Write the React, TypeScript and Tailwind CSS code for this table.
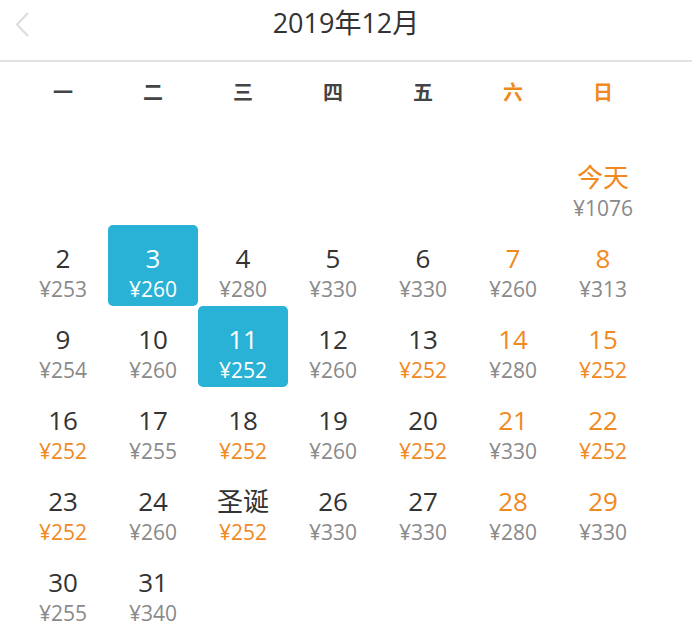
type Day = { label: string; price: string; weekend?: boolean; today?: boolean; low?: boolean; selected?: boolean };

const WEEK = ['一', '二', '三', '四', '五', '六', '日'];

const lows = new Set([13, 15, 16, 18, 20, 22, 23, 25]);
const prices: Record<number, string> = {
  1: '1076', 2: '253', 3: '260', 4: '280', 5: '330', 6: '330', 7: '260', 8: '313',
  9: '254', 10: '260', 11: '252', 12: '260', 13: '252', 14: '280', 15: '252',
  16: '252', 17: '255', 18: '252', 19: '260', 20: '252', 21: '330', 22: '252',
  23: '252', 24: '260', 25: '252', 26: '330', 27: '330', 28: '280', 29: '330',
  30: '255', 31: '340',
};

function buildDays(): (Day | null)[] {
  const out: (Day | null)[] = [null, null, null, null, null, null];
  for (let d = 1; d <= 31; d++) {
    const col = out.length % 7;
    out.push({
      label: d === 1 ? '今天' : d === 25 ? '圣诞' : String(d),
      price: prices[d],
      weekend: col >= 5,
      today: d === 1,
      low: lows.has(d),
      selected: d === 3 || d === 11,
    });
  }
  return out;
}

function Cell({ day }: { day: Day | null }) {
  if (!day) return <div className="h-[81px]" />;
  const numColor = day.selected ? 'text-white' : day.weekend || day.today ? 'text-[#f0891e]' : 'text-[#333333]';
  const priceColor = day.selected ? 'text-white' : day.low ? 'text-[#f0891e]' : 'text-[#8a8a8a]';
  return (
    <div className={`h-[81px] flex flex-col items-center pt-[18px] rounded-[5px] ${day.selected ? 'bg-[#29b2d6]' : ''}`}>
      <div className={`text-[26px] leading-[30px] ${numColor}`}>{day.label}</div>
      <div className={`text-[21px] leading-[26px] mt-[3px] ${priceColor}`}>¥{day.price}</div>
    </div>
  );
}

export default function App() {
  const days = buildDays();
  return (
    <div className="w-[692px] h-[638px] bg-white overflow-hidden" style={{ fontFamily: '"Open Sans", "Noto Sans CJK SC", sans-serif' }}>
      {/* Header */}
      <div className="relative h-[62px] flex justify-center border-b-2 border-[#e2e2e2]">
        <svg className="absolute left-[14px] top-[11px]" width="18" height="28" viewBox="0 0 18 28">
          <polyline points="14,2 3,13.5 14,25" fill="none" stroke="#dcdcdc" strokeWidth="2" />
        </svg>
        <span className="text-[27px] text-[#333333] leading-[30px] mt-[8px]">2019年12月</span>
      </div>

      {/* Weekday row */}
      <div className="grid grid-cols-7 w-[630px] ml-[18px] h-[62px] items-center">
        {WEEK.map((w, i) => (
          <div key={w} className={`text-center text-[20px] font-bold ${i >= 5 ? 'text-[#f0891e]' : 'text-[#444444]'}`}>{w}</div>
        ))}
      </div>

      {/* Days */}
      <div className="grid grid-cols-7 w-[630px] ml-[18px] mt-[20px]">
        {days.map((d, i) => <Cell key={i} day={d} />)}
      </div>
    </div>
  );
}
